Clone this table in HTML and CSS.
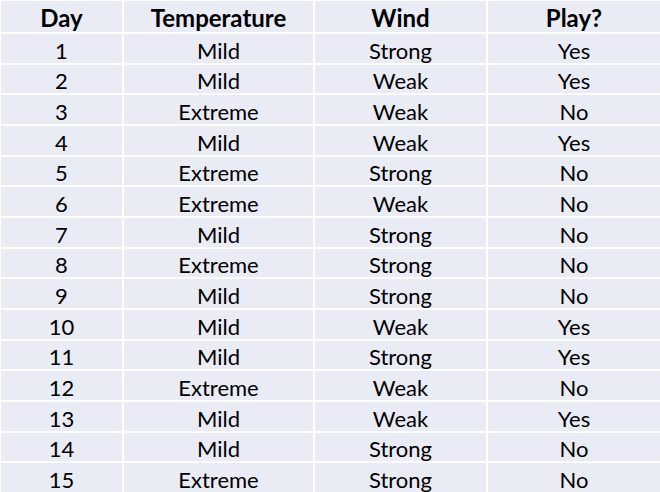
FILE: index.html
```
<!DOCTYPE html>
<html>
<head>
<meta charset="utf-8">
<link rel="stylesheet" href="styles.css">
</head>
<body>
<div class="table">
  <div class="cell head">Day</div><div class="cell head">Temperature</div><div class="cell head">Wind</div><div class="cell head">Play?</div>
  <div class="cell">1</div><div class="cell">Mild</div><div class="cell">Strong</div><div class="cell">Yes</div>
  <div class="cell">2</div><div class="cell">Mild</div><div class="cell">Weak</div><div class="cell">Yes</div>
  <div class="cell">3</div><div class="cell">Extreme</div><div class="cell">Weak</div><div class="cell">No</div>
  <div class="cell">4</div><div class="cell">Mild</div><div class="cell">Weak</div><div class="cell">Yes</div>
  <div class="cell">5</div><div class="cell">Extreme</div><div class="cell">Strong</div><div class="cell">No</div>
  <div class="cell">6</div><div class="cell">Extreme</div><div class="cell">Weak</div><div class="cell">No</div>
  <div class="cell">7</div><div class="cell">Mild</div><div class="cell">Strong</div><div class="cell">No</div>
  <div class="cell">8</div><div class="cell">Extreme</div><div class="cell">Strong</div><div class="cell">No</div>
  <div class="cell">9</div><div class="cell">Mild</div><div class="cell">Strong</div><div class="cell">No</div>
  <div class="cell">10</div><div class="cell">Mild</div><div class="cell">Weak</div><div class="cell">Yes</div>
  <div class="cell">11</div><div class="cell">Mild</div><div class="cell">Strong</div><div class="cell">Yes</div>
  <div class="cell">12</div><div class="cell">Extreme</div><div class="cell">Weak</div><div class="cell">No</div>
  <div class="cell">13</div><div class="cell">Mild</div><div class="cell">Weak</div><div class="cell">Yes</div>
  <div class="cell">14</div><div class="cell">Mild</div><div class="cell">Strong</div><div class="cell">No</div>
  <div class="cell">15</div><div class="cell">Extreme</div><div class="cell">Strong</div><div class="cell">No</div>
</div>
</body>
</html>
```
FILE: styles.css
```
html, body {
  margin: 0;
  padding: 0;
  background: #ffffff;
}
.table {
  box-sizing: border-box;
  width: 660px;
  height: 492px;
  padding: 1px 0 0 1px;
  display: grid;
  grid-template-columns: 121px 189px 171px 1fr;
  grid-template-rows: 31px repeat(15, 1fr);
  gap: 2px;
  background: #ffffff;
  font-family: Lato, "Open Sans", sans-serif;
  font-size: 22px;
  line-height: 1;
  color: #000;
}
.cell {
  background: #e9ebf5;
  display: flex;
  align-items: center;
  justify-content: center;
  padding-top: 5px;
}
.head {
  font-weight: bold;
  font-size: 24px;
  padding-top: 3px;
}
```
